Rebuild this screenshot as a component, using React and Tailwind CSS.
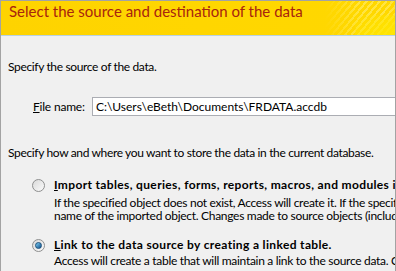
import React from 'react';

function Radio({ checked }) {
    return (
        <span className="relative flex h-[13px] w-[13px] shrink-0 items-center justify-center rounded-full border border-[#8e8f8f] bg-gradient-to-br from-[#d9d9d9] to-[#fbfbfb]">
            {checked && (
                <span className="h-[7px] w-[7px] rounded-full bg-gradient-to-br from-[#7fd2f5] to-[#0d4e8a] border border-[#1b4f7a]" />
            )}
        </span>
    );
}

export default function App() {
    return (
        <div className="w-[396px] h-[271px] overflow-hidden bg-[#f0f0f0] border-l border-r border-t border-[#a3a3a3] text-[12px] text-black" style={{ fontFamily: 'Lato, "Open Sans", sans-serif' }}>
            <div className="relative h-[35px] overflow-hidden border-b border-[#b9d1e3] bg-gradient-to-r from-[#fed300] via-[#ffd600] to-[#ffd800]">
                {/* stripes */}
                <div className="absolute right-[-20px] top-[-10px] h-[60px] w-[90px] bg-[repeating-linear-gradient(-50deg,transparent_0px,transparent_3px,rgba(255,240,120,0.55)_3px,rgba(255,240,120,0.55)_5px)] [mask-image:linear-gradient(to_right,transparent,black_40%,black_70%,transparent)]" />
                <div className="absolute right-0 bottom-0 h-[20px] w-[40px] bg-gradient-to-tl from-[#ffe600] to-transparent" />
                <h1 className="relative pl-[8px] text-[15px] leading-[20px] text-[#a8240e]">
                    Select the source and destination of the data
                </h1>
            </div>

            <div className="pl-[7px]">
                <p className="mt-[23px] leading-[16px] tracking-[-0.35px]">Specify the source of the data.</p>

                <div className="mt-[22px] flex items-center pl-[25px]">
                    <label className="w-[59px] leading-[16px] tracking-[-0.2px]"><span className="underline">F</span>ile name:</label>
                    <div className="flex h-[19px] flex-1 items-center border border-[#abadb3] border-r-0 bg-white pl-[3px] whitespace-nowrap">
                        C:\Users\eBeth\Documents\FRDATA.accdb
                    </div>
                </div>

                <p className="mt-[29px] leading-[16px] whitespace-nowrap tracking-[-0.35px]">Specify how and where you want to store the data in the current database.</p>

                <div className="mt-[16px] pl-[24px]">
                    <div className="flex items-center gap-[9px]">
                        <Radio />
                        <span className="font-bold whitespace-nowrap leading-[16px] tracking-[0.35px]"><span className="underline">I</span>mport tables, queries, forms, reports, macros, and modules into the current database.</span>
                    </div>
                    <div className="pl-[22px] mt-[3px] leading-[13px] whitespace-nowrap tracking-[-0.3px] overflow-hidden">
                        <div>If the specified object does not exist, Access will create it. If the specified object already exists, Access will append a number to the</div>
                        <div>name of the imported object. Changes made to source objects (including data in tables) will not be reflected in the current database.</div>
                    </div>

                    <div className="mt-[15px] flex items-center gap-[9px]">
                        <Radio checked />
                        <span className="font-bold whitespace-nowrap leading-[16px] tracking-[0.35px]"><span className="underline">L</span>ink to the data source by creating a linked table.</span>
                    </div>
                    <div className="pl-[22px] mt-[1px] leading-[13px] whitespace-nowrap tracking-[-0.3px] overflow-hidden">
                        <div>Access will create a table that will maintain a link to the source data. Changes made to the data in Access will be reflected in the source and vice versa.</div>
                    </div>
                </div>
            </div>
        </div>
    );
}
